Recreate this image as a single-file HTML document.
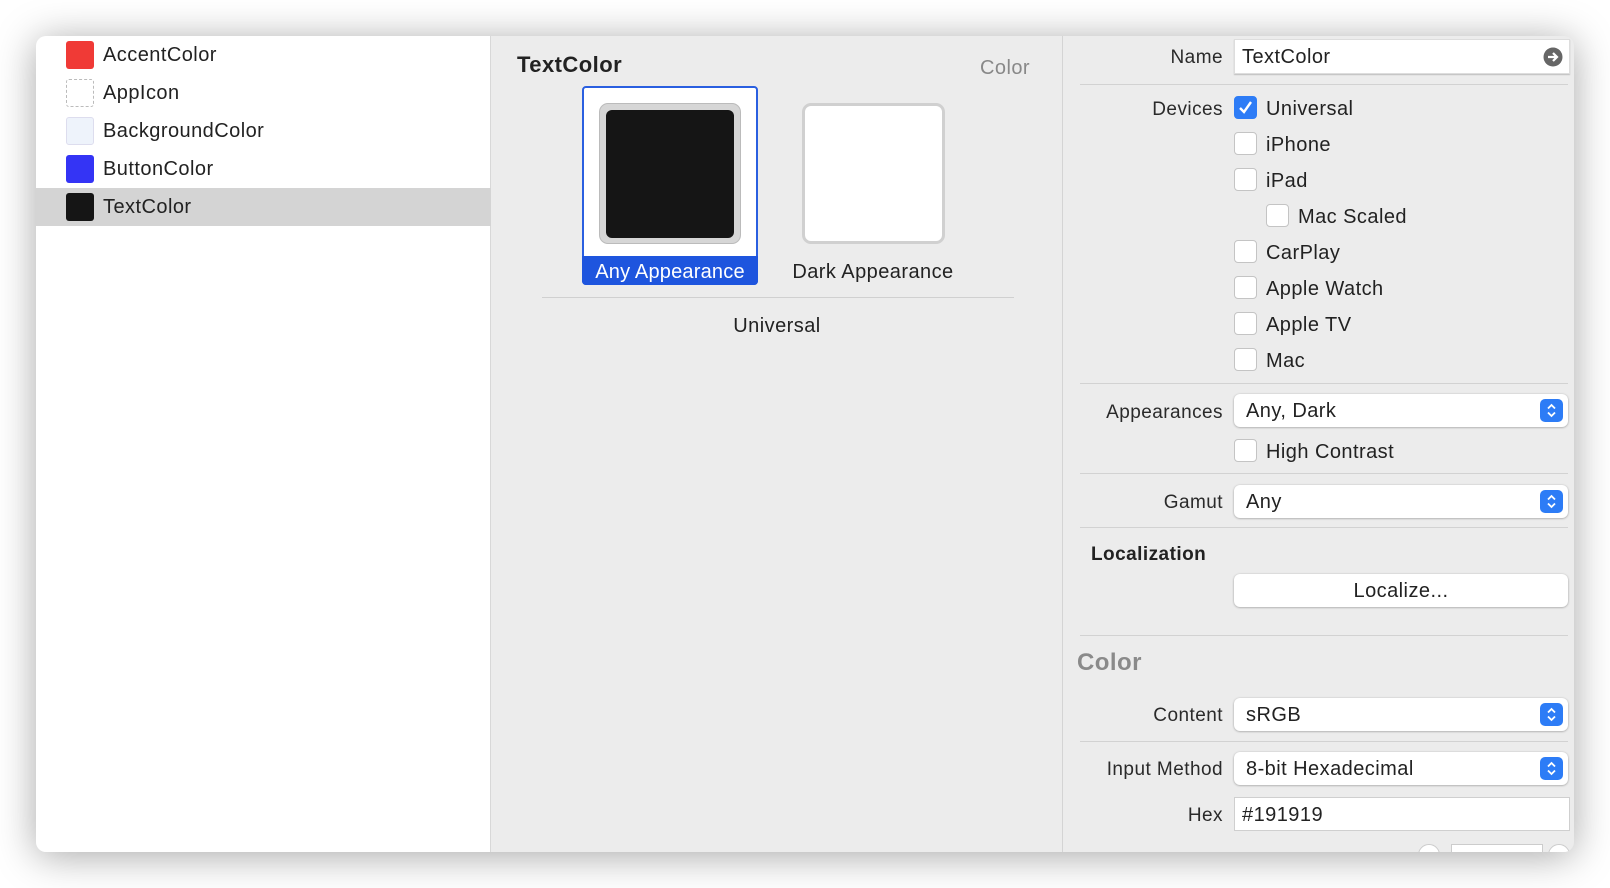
<!DOCTYPE html>
<html><head><meta charset="utf-8"><style>
*{box-sizing:border-box;margin:0;padding:0}
body{width:1610px;height:888px;background:#fff;font-family:"Liberation Sans",sans-serif;position:relative;overflow:hidden;color:#222;letter-spacing:0.45px}
.win{position:absolute;left:36px;top:36px;width:1538px;height:816px;border-radius:10px;overflow:hidden;background:#ececec;box-shadow:0 4px 40px rgba(0,0,0,.35)}
.side{position:absolute;left:0;top:0;width:455px;height:816px;background:#fff;border-right:1px solid #d8d8d8}
.row{position:absolute;left:0;width:455px;height:38px;font-size:20px;line-height:38px}
.row .sw{position:absolute;left:30px;top:5px;width:28px;height:28px;border-radius:3px}
.row span{position:absolute;left:67px;top:0}
.abs{position:absolute}
.lbl{position:absolute;right:351px;font-size:19px;color:#2a2a2a;text-align:right;white-space:nowrap}
.cb{position:absolute;width:23px;height:23px;border:1px solid #c4c4c4;background:#fff;border-radius:4px}
.ct{position:absolute;font-size:20px;color:#222;white-space:nowrap}
.sep{position:absolute;left:1044px;width:488px;height:1px;background:#d2d2d2}
.pop{position:absolute;left:1198px;width:334px;height:33px;background:#fff;border-radius:6px;box-shadow:0 0.5px 2px rgba(0,0,0,.35);font-size:20px;line-height:35px;padding-left:12px}
.pop .ar{position:absolute;right:5px;top:5px;width:23px;height:23px;border-radius:5px;background:#2d7cf6}
.fld{position:absolute;left:1198px;width:336px;height:34px;background:#fff;border:1px solid #cfcfcf;font-size:20px;line-height:35px;padding-left:7px}
</style></head><body>
<div class="win">
 <div class="side">
  <div class="row" style="top:0"><div class="sw" style="background:#f03a36"></div><span>AccentColor</span></div>
  <div class="row" style="top:38px"><div class="sw" style="border:1.5px dashed #bbb;background:#fff"></div><span>AppIcon</span></div>
  <div class="row" style="top:76px"><div class="sw" style="background:#eef3fb;border:1px solid #dde"></div><span>BackgroundColor</span></div>
  <div class="row" style="top:114px"><div class="sw" style="background:#3434f5"></div><span>ButtonColor</span></div>
  <div class="row" style="top:152px;background:#d4d4d4"><div class="sw" style="background:#151515"></div><span>TextColor</span></div>
 </div>
 <div class="abs" style="left:481px;top:16px;font-size:22px;font-weight:bold;color:#222">TextColor</div>
 <div class="abs" style="left:944px;top:21px;font-size:20px;color:#888">Color</div>
 <div class="abs" style="left:546px;top:50px;width:176px;height:199px;border:2px solid #2a5fe0;border-radius:4px;background:#fff"></div>
 <div class="abs" style="left:563px;top:67px;width:142px;height:141px;border-radius:9px;background:#d6d6d6;border:1px solid #bbb"></div>
 <div class="abs" style="left:570px;top:74px;width:128px;height:128px;border-radius:6px;background:#151515"></div>
 <div class="abs" style="left:546px;top:220px;width:176px;height:29px;background:#1e55de;color:#fff;font-size:20px;line-height:33px;text-align:center;border-radius:0 0 4px 4px;letter-spacing:0.2px;overflow:hidden">Any Appearance</div>
 <div class="abs" style="left:726px;top:225px;width:222px;font-size:20px;text-align:center;color:#222">Dark Appearance</div>
 <div class="abs" style="left:766px;top:67px;width:143px;height:141px;border-radius:9px;background:#fff;border:3px solid #d0d0d0"></div>
 <div class="abs" style="left:506px;top:261px;width:472px;height:1px;background:#d0d0d0"></div>
 <div class="abs" style="left:640px;top:279px;width:202px;font-size:20px;text-align:center;color:#222">Universal</div>
 <div class="abs" style="left:1026px;top:0;width:1px;height:816px;background:#d4d4d4"></div>
 <div class="lbl" style="top:11px">Name</div>
 <div class="fld" style="top:3px;height:35px;border-color:#ddd;box-shadow:0 1px 1px rgba(0,0,0,.2)">TextColor
  <svg class="abs" style="right:6px;top:7px" width="20" height="20" viewBox="0 0 20 20"><circle cx="10" cy="10" r="9.5" fill="#666"/><path d="M5 10h8M10 6l4 4-4 4" stroke="#fff" stroke-width="2.2" fill="none"/></svg></div>
 <div class="sep" style="top:48px"></div>
 <div class="lbl" style="top:63px">Devices</div>
 <div class="cb" style="left:1198px;top:60px;background:#2d7cf6;border-color:#2d7cf6"><svg width="21" height="21" viewBox="0 0 21 21"><path d="M5 11l4 4 7-10" stroke="#fff" stroke-width="2.4" fill="none"/></svg></div>
 <div class="ct" style="left:1230px;top:62px">Universal</div>
 <div class="cb" style="left:1198px;top:96px"></div><div class="ct" style="left:1230px;top:98px">iPhone</div>
 <div class="cb" style="left:1198px;top:132px"></div><div class="ct" style="left:1230px;top:134px">iPad</div>
 <div class="cb" style="left:1230px;top:168px"></div><div class="ct" style="left:1262px;top:170px">Mac Scaled</div>
 <div class="cb" style="left:1198px;top:204px"></div><div class="ct" style="left:1230px;top:206px">CarPlay</div>
 <div class="cb" style="left:1198px;top:240px"></div><div class="ct" style="left:1230px;top:242px">Apple Watch</div>
 <div class="cb" style="left:1198px;top:276px"></div><div class="ct" style="left:1230px;top:278px">Apple TV</div>
 <div class="cb" style="left:1198px;top:312px"></div><div class="ct" style="left:1230px;top:314px">Mac</div>
 <div class="sep" style="top:347px"></div>
 <div class="lbl" style="top:366px">Appearances</div>
 <div class="pop" style="top:358px">Any, Dark<div class="ar"><svg width="23" height="23" viewBox="0 0 23 23"><path d="M8 9.5l3.5-3.5 3.5 3.5M8 13.5l3.5 3.5 3.5-3.5" stroke="#fff" stroke-width="1.8" fill="none"/></svg></div></div>
 <div class="cb" style="left:1198px;top:403px"></div><div class="ct" style="left:1230px;top:405px">High Contrast</div>
 <div class="sep" style="top:437px"></div>
 <div class="lbl" style="top:456px">Gamut</div>
 <div class="pop" style="top:449px">Any<div class="ar"><svg width="23" height="23" viewBox="0 0 23 23"><path d="M8 9.5l3.5-3.5 3.5 3.5M8 13.5l3.5 3.5 3.5-3.5" stroke="#fff" stroke-width="1.8" fill="none"/></svg></div></div>
 <div class="sep" style="top:491px"></div>
 <div class="abs" style="left:1055px;top:508px;font-size:19px;font-weight:bold;color:#222">Localization</div>
 <div class="pop" style="top:538px;padding:0;text-align:center">Localize...</div>
 <div class="sep" style="top:599px"></div>
 <div class="abs" style="left:1041px;top:613px;font-size:24px;font-weight:bold;color:#8a8a8a">Color</div>
 <div class="lbl" style="top:669px">Content</div>
 <div class="pop" style="top:662px">sRGB<div class="ar"><svg width="23" height="23" viewBox="0 0 23 23"><path d="M8 9.5l3.5-3.5 3.5 3.5M8 13.5l3.5 3.5 3.5-3.5" stroke="#fff" stroke-width="1.8" fill="none"/></svg></div></div>
 <div class="sep" style="top:705px"></div>
 <div class="lbl" style="top:723px">Input Method</div>
 <div class="pop" style="top:716px">8-bit Hexadecimal<div class="ar"><svg width="23" height="23" viewBox="0 0 23 23"><path d="M8 9.5l3.5-3.5 3.5 3.5M8 13.5l3.5 3.5 3.5-3.5" stroke="#fff" stroke-width="1.8" fill="none"/></svg></div></div>
 <div class="lbl" style="top:769px">Hex</div>
 <div class="fld" style="top:761px">#191919</div>
 <div class="abs" style="left:1382px;top:808px;width:22px;height:22px;border-radius:50%;background:#fff;border:1px solid #ccc"></div>
 <div class="abs" style="left:1415px;top:808px;width:92px;height:20px;background:#fff;border:1px solid #ccc"></div>
 <div class="abs" style="left:1512px;top:808px;width:22px;height:22px;border-radius:50%;background:#fff;border:1px solid #ccc"></div>
</div>
</body></html>
